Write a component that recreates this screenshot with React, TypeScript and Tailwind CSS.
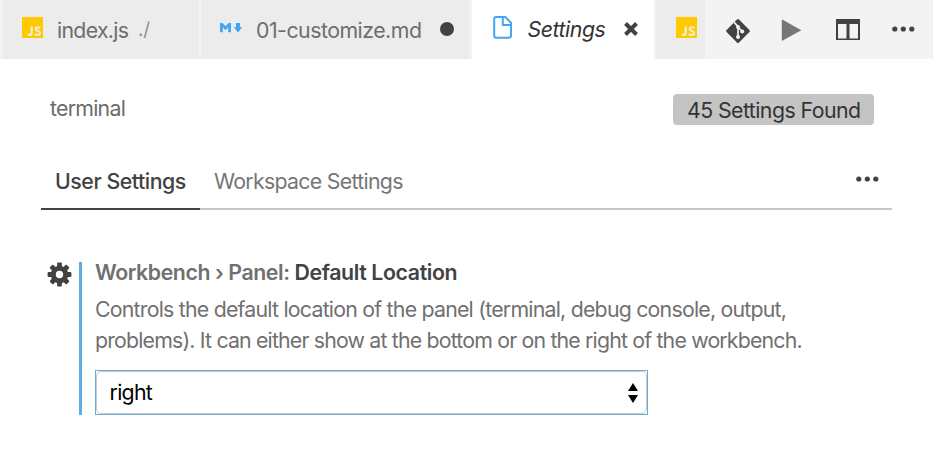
const JsIcon = () => (
  <svg className="h-[21px] w-[21px] shrink-0" viewBox="0 0 21 21" fill="none">
    <path d="M0 0h21v21H0z" fill="#ffca00" />
    <path d="M9.700 9.500v6.300q0 2-1.900 2-.9 0-1.700-.5" stroke="#f1eddc" strokeWidth="2.200" />
    <path d="M18.300 10.900q-1.200-.7-2.700-.7-2 0-2 1.700 0 1.200 2.200 1.900t2.300 2q0 2.100-2.500 2.100-1.700 0-2.900-.8" stroke="#f1eddc" strokeWidth="2.100" />
  </svg>
);

const MarkdownIcon = () => (
  <svg className="h-[10px] w-[22px] shrink-0" viewBox="0 0 22 10" fill="#42a5f5">
    <path d="M0 9.300V0h2.500l3 3.200L8.500 0H11v9.300H8.200V4.200L5.500 7.200 2.800 4.200v5.100z" />
    <path d="M16 0h4v4.300h2.200L18 9.500l-4.200-5.200H16z" />
  </svg>
);

const FileIcon = () => (
  <svg className="h-[24px] w-[20px] shrink-0" viewBox="0 0 20 24" fill="none" stroke="#42a5f5" strokeWidth="2" strokeLinejoin="round">
    <path d="M3 2h9.300L18 7.700v13q0 2-2 2H3.200q-2 0-2-2V4q0-2 1.800-2z" />
    <path d="M9.800 2v8h8" />
  </svg>
);

const GitIcon = () => (
  <svg className="h-[24px] w-[24px] shrink-0" viewBox="0 0 24 24">
    <rect x="3.200" y="3.200" width="17.600" height="17.600" rx="1.500" transform="rotate(45 12 12)" fill="#424242" />
    <g stroke="#f3f3f3" strokeWidth="1.700" fill="none">
      <path d="M8.200 3.400l3.800 4.200v11M12 8l4.300 4.500" />
    </g>
    <g fill="#f3f3f3">
      <circle cx="12" cy="7.900" r="2" />
      <circle cx="16.200" cy="12.500" r="2" />
      <circle cx="12" cy="18" r="2" />
    </g>
  </svg>
);

const TOOTH_ANGLES = [0, 45, 90, 135];

const GearIcon = () => (
  <svg className="h-[25px] w-[25px] shrink-0" viewBox="0 0 25 25">
    {TOOTH_ANGLES.map((angle) => (
      <rect key={angle} x="10.100" y="0.600" width="4.800" height="23.800" rx="1" fill="#424242" transform={`rotate(${angle} 12.500 12.500)`} />
    ))}
    <circle cx="12.500" cy="12.500" r="8.800" fill="#424242" />
    <circle cx="12.500" cy="12.500" r="3.700" fill="#ffffff" />
  </svg>
);

const MoreIcon = () => (
  <svg className="h-[6px] w-[23px] shrink-0" viewBox="0 0 23 6" fill="#424242">
    <circle cx="2.800" cy="3" r="2.600" />
    <circle cx="11.300" cy="3" r="2.600" />
    <circle cx="19.800" cy="3" r="2.600" />
  </svg>
);

function TabBar() {
  return (
    <div className="flex h-[59px] bg-[#f3f3f3] pl-[2px] text-[21.3px] leading-[30px]">
      <div className="flex w-[199px] shrink-0 border-r-2 border-[#f3f3f3] bg-[#ececec] pt-[17px] pl-[20px]">
        <JsIcon />
        <span className="-mt-[2px] ml-[14px] w-[81px] tracking-[-0.7px] text-[#6e6e6e]">index.js</span>
        <span className="-mt-[2px] text-[19px] tracking-[-0.2px] text-[#8f8f8f]">./</span>
      </div>
      <div className="flex w-[271px] shrink-0 border-r-2 border-[#f3f3f3] bg-[#ececec] pt-[15px] pl-[19px]">
        <div className="pt-[8px]">
          <MarkdownIcon />
        </div>
        <span className="ml-[14px] w-[167px] tracking-[-0.5px] text-[#6e6e6e]">01-customize.md</span>
        <span className="mt-[7px] ml-[17px] h-[14px] w-[14px] rounded-full bg-[#424242]" />
      </div>
      <div className="flex w-[184px] shrink-0 border-r-2 border-[#f3f3f3] bg-white pt-[15px] pl-[21px]">
        <FileIcon />
        <span className="-mt-px ml-[14.500px] w-[80px] tracking-[-0.45px] text-[#333333] italic">Settings</span>
        <svg className="mt-[7px] ml-[16px] h-[14px] w-[14px]" viewBox="0 0 14 14" stroke="#424242" strokeWidth="4">
          <path d="M1.500 1.500l11 11M12.500 1.500l-11 11" />
        </svg>
      </div>
      <div className="w-[49px] shrink-0 bg-[#ececec] pt-[17px] pl-[20px]">
        <JsIcon />
      </div>
      <div className="flex flex-1 pl-[21px]">
        <div className="mt-[19px]">
          <GitIcon />
        </div>
        <svg className="mt-[19px] ml-[31px] h-[23px] w-[21px]" viewBox="0 0 21 23" fill="#767676">
          <path d="M.8.300L20.300 11.300.8 22z" />
        </svg>
        <svg className="mt-[19px] ml-[34px] h-[21px] w-[24px]" viewBox="0 0 24 21" fill="#424242">
          <path fillRule="evenodd" d="M0 0h24v21H0zM2 5v14.500h8.500V5zM13.500 5v14.500H22V5z" />
        </svg>
        <div className="mt-[26px] ml-[32px]">
          <MoreIcon />
        </div>
      </div>
    </div>
  );
}

export default function App() {
  return (
    <div className="h-[455px] w-[933px] overflow-hidden bg-white font-['Inter',sans-serif] whitespace-nowrap">
      <TabBar />
      <div className="flex items-start justify-between pt-[35px] pr-[59px] pl-[50px] text-[21.3px] leading-[30px]">
        <span className="-mt-px tracking-[-0.75px] text-[#6b6b6b]">terminal</span>
        <span className="h-[31px] w-[201px] rounded-[4px] bg-[#c4c4c4] pt-px pl-[14px] tracking-[-0.56px] text-[#333333]">
          45 Settings Found
        </span>
      </div>
      <div className="mx-[41px] mt-[28px] flex h-[57px] items-start border-b-2 border-[#c8c8c8] pt-[13px] text-[21.3px] leading-[30px]">
        <div className="h-[44px] w-[159px] shrink-0 border-b-2 border-[#424242] pl-[14px] font-medium tracking-[-0.45px] text-[#424242]">
          User Settings
        </div>
        <span className="ml-[14px] tracking-[-0.7px] text-[#767676]">Workspace Settings</span>
        <div className="mt-[10px] mr-[13px] ml-auto">
          <MoreIcon />
        </div>
      </div>
      <div className="flex pt-[52px] pl-[47px]">
        <GearIcon />
        <div className="ml-[7px] h-[153px] w-[3px] bg-[#5fade0]" />
        <div className="ml-[13px] text-[21.3px] leading-[31px] text-[#707070]">
          <div className="-mt-[5px] font-semibold tracking-[-0.43px]">
            Workbench › Panel: <span className="tracking-[-0.38px] text-[#424242]">Default Location</span>
          </div>
          <div className="mt-[6px] tracking-[-0.77px]">Controls the default location of the panel (terminal, debug console, output,</div>
          <div className="tracking-[-0.82px]">problems). It can either show at the bottom or on the right of the workbench.</div>
          <div className="mt-[14px] h-[45px] w-[553px] border border-[#6badd8]">
            <div className="flex h-full items-center justify-between rounded-[5px] border border-[#c8c8c8] pr-[8px] pl-[12.500px] text-black">
              <span className="tracking-[-0.7px]">right</span>
              <svg className="h-[20px] w-[10px]" viewBox="0 0 10 20" fill="black">
                <path d="M5 0l5 8H0zM5 20l5-8H0z" />
              </svg>
            </div>
          </div>
        </div>
      </div>
    </div>
  );
}
